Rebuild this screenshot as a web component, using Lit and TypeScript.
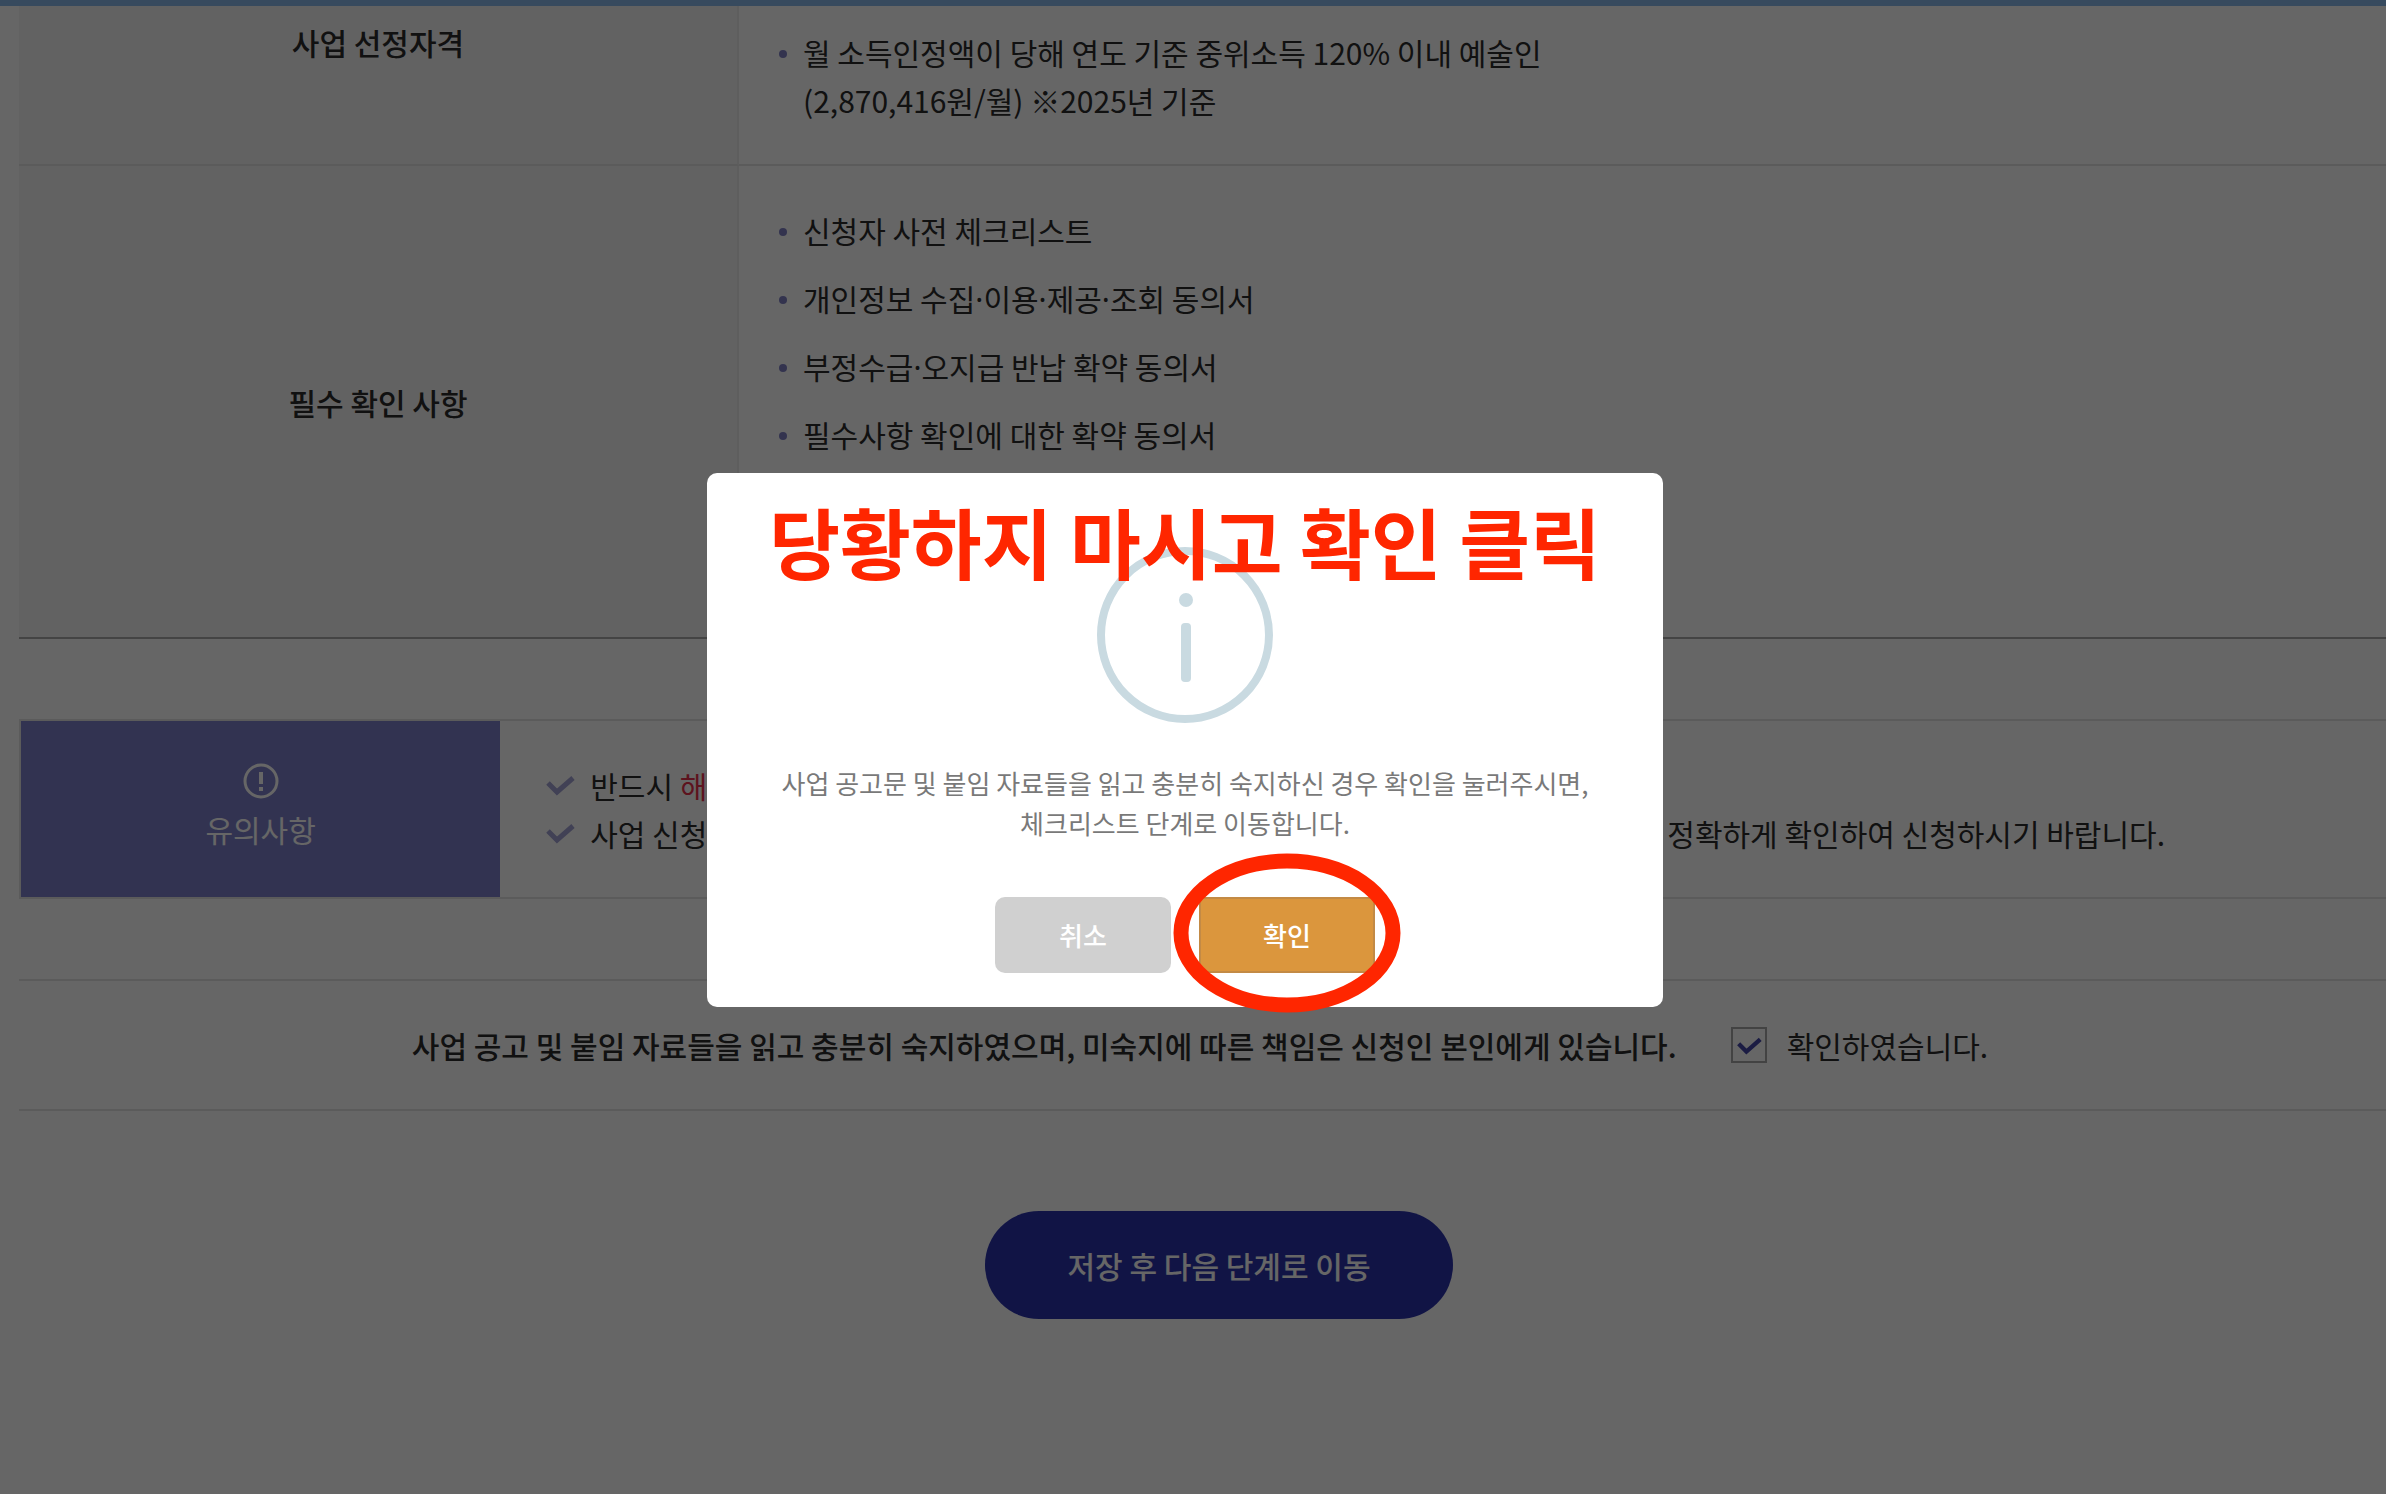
import { LitElement, html, css, svg } from "lit";
import { customElement, state } from "lit/decorators.js";

const REQUIRED_DOCS = [
  "신청자 사전 체크리스트",
  "개인정보 수집·이용·제공·조회 동의서",
  "부정수급·오지급 반납 확약 동의서",
  "필수사항 확인에 대한 확약 동의서",
];

const tick = svg`<path d="M3 9 L12 18 L28 4" fill="none" stroke="currentColor" stroke-width="5"></path>`;

// The CJK family has a full-width middle dot, so the dot is set in the Latin family.
const withNarrowDots = (text: string) =>
  text.split("·").map((part, i) => (i ? html`<span class="dot">·</span>${part}` : part));

@customElement("confirm-dialog")
class ConfirmDialog extends LitElement {
  static styles = css`
    :host {
      display: block;
      width: 956px;
      max-width: 100%;
    }
    .dialog {
      position: relative;
      box-sizing: border-box;
      display: flex;
      flex-direction: column;
      align-items: center;
      padding: 74px 20px 34px;
      border-radius: 10px;
      background: #fff;
    }
    .callout {
      position: absolute;
      top: 24px;
      left: 0;
      right: 0;
      margin: 0;
      text-align: center;
      white-space: nowrap;
      font-size: 77px;
      line-height: 88px;
      font-weight: 700;
      color: #ff2600;
    }
    .info {
      display: block;
      width: 176px;
      height: 176px;
    }
    .message {
      margin: 40px 0 54px;
      text-align: center;
      font-size: 26px;
      line-height: 40px;
      color: #797979;
    }
    .actions {
      display: flex;
      gap: 28px;
    }
    .button {
      width: 176px;
      height: 76px;
      padding: 0;
      border: 0;
      border-radius: 10px;
      font: inherit;
      font-size: 26px;
      font-weight: 500;
      color: #fff;
      background: #d0d0d0;
    }
    .confirm-wrap {
      position: relative;
      display: flex;
    }
    .confirm {
      background: #db963d;
      border: 2px solid #c38a45;
      border-radius: 4px;
    }
    .ring {
      position: absolute;
      left: -26px;
      top: -44px;
      width: 228px;
      height: 160px;
      pointer-events: none;
    }
  `;

  render() {
    return html`
      <section class="dialog" role="dialog" aria-modal="true" aria-labelledby="message">
        <svg class="info" viewBox="0 0 176 176" aria-hidden="true">
          <circle cx="88" cy="88" r="84" fill="none" stroke="#c9dae1" stroke-width="8"></circle>
          <circle cx="89" cy="53" r="7" fill="#c9dae1"></circle>
          <rect x="84" y="76" width="10" height="59" rx="4" fill="#c9dae1"></rect>
        </svg>
        <p class="message" id="message">
          사업 공고문 및 붙임 자료들을 읽고 충분히 숙지하신 경우 확인을 눌러주시면,<br />체크리스트 단계로 이동합니다.
        </p>
        <div class="actions">
          <button class="button" type="button">취소</button>
          <div class="confirm-wrap">
            <button class="button confirm" type="button">확인</button>
            <svg class="ring" viewBox="0 0 228 160" aria-hidden="true">
              <ellipse cx="114" cy="80" rx="106" ry="72" fill="none" stroke="#ff2600" stroke-width="15"></ellipse>
            </svg>
          </div>
        </div>
        <p class="callout">당황하지 마시고 확인 클릭</p>
      </section>
    `;
  }
}

@customElement("app-root")
class AppRoot extends LitElement {
  @state() private agreed = true;

  static styles = css`
    :host {
      display: block;
      font-family: "Noto Sans CJK KR", "Noto Sans", sans-serif;
      font-size: 30px;
      line-height: 48px;
      color: #2b2b2b;
    }
    .page {
      position: relative;
      min-height: 100vh;
      overflow: hidden;
      background: #fff;
    }
    .topbar {
      height: 6px;
      background: #8ab9ea;
    }
    .content {
      margin: 0 -33px 0 19px;
    }
    .table {
      width: 100%;
      border-collapse: separate;
      border-spacing: 0;
      table-layout: fixed;
      border-bottom: 2px solid #aaa;
    }
    .head {
      width: 30%;
      box-sizing: border-box;
      padding: 0;
      border-right: 2px solid #eaeaea;
      background: #f5f5f5;
      font-weight: 500;
      text-align: center;
    }
    .cell {
      padding: 40px;
      vertical-align: top;
    }
    .first .head {
      padding-top: 12px;
      vertical-align: top;
    }
    .first .cell {
      padding-top: 22px;
    }
    .first .head,
    .first .cell {
      border-bottom: 2px solid #e4e4e4;
    }
    .required {
      height: 471px;
    }
    .list {
      margin: 0;
      padding: 0;
      list-style: none;
      display: grid;
      gap: 20px;
    }
    .item {
      display: grid;
      grid-template-columns: 24px 1fr;
    }
    .item::before {
      content: "";
      width: 8px;
      height: 8px;
      margin-top: 22px;
      border-radius: 50%;
      background: #7f80c4;
    }
    .dot {
      font-family: "Noto Sans", sans-serif;
      line-height: 1;
    }
    .notice {
      display: grid;
      grid-template-columns: 20% 1fr;
      margin-top: 80px;
      border: 2px solid #e4e4e4;
    }
    .notice-title {
      display: flex;
      flex-direction: column;
      align-items: center;
      gap: 6px;
      padding: 42px 0 44px;
      background: #7e80cb;
      color: #fff;
    }
    .alert {
      width: 36px;
      height: 36px;
    }
    .notice-list {
      margin: 0;
      padding: 0 45px;
      list-style: none;
      align-self: center;
    }
    .notice-item {
      display: grid;
      grid-template-columns: 45px auto auto;
      justify-content: start;
      align-items: center;
    }
    .tick {
      width: 30px;
      height: 22px;
      color: #a3a3d4;
    }
    .tail {
      margin-left: 960px;
    }
    .red {
      color: #e8304c;
    }
    .agree {
      display: flex;
      justify-content: center;
      align-items: center;
      gap: 54px;
      margin-top: 80px;
      padding: 40px 38px 40px 0;
      border-top: 2px solid #e4e4e4;
      border-bottom: 2px solid #e4e4e4;
    }
    .statement {
      margin: 0;
      font-weight: 500;
    }
    .check {
      display: flex;
      align-items: center;
      gap: 20px;
    }
    .box-wrap {
      display: grid;
      place-items: center;
    }
    .box,
    .box-tick {
      grid-area: 1 / 1;
    }
    .box {
      appearance: none;
      box-sizing: border-box;
      width: 36px;
      height: 36px;
      margin: 0;
      border: 2px solid #a8a8a8;
      background: #fff;
    }
    .box-tick {
      width: 26px;
      height: 19px;
      color: #4547a8;
      pointer-events: none;
    }
    .submit {
      display: flex;
      justify-content: center;
      margin-top: 100px;
    }
    .save {
      width: 468px;
      height: 108px;
      padding: 0;
      border: 0;
      border-radius: 54px;
      background: #2c34ad;
      color: #fff;
      font: inherit;
      font-weight: 500;
    }
    .overlay {
      position: absolute;
      inset: 0;
      display: flex;
      justify-content: center;
      align-items: center;
      padding: 0 16px 14px 0;
      background: rgba(0, 0, 0, 0.6);
    }
  `;

  render() {
    return html`
      <main class="page">
        <div class="topbar"></div>
        <div class="content">
          <table class="table">
            <tbody>
              <tr class="first">
                <th class="head" scope="row">사업 선정자격</th>
                <td class="cell">
                  <ul class="list">
                    <li class="item">
                      <span>월 소득인정액이 당해 연도 기준 중위소득 120% 이내 예술인<br />(2,870,416원/월) ※2025년 기준</span>
                    </li>
                  </ul>
                </td>
              </tr>
              <tr class="required">
                <th class="head" scope="row">필수 확인 사항</th>
                <td class="cell">
                  <ul class="list">
                    ${REQUIRED_DOCS.map((doc) => html`<li class="item"><span>${withNarrowDots(doc)}</span></li>`)}
                  </ul>
                </td>
              </tr>
            </tbody>
          </table>

          <section class="notice">
            <div class="notice-title">
              <svg class="alert" viewBox="0 0 36 36" aria-hidden="true">
                <circle cx="18" cy="18" r="16" fill="none" stroke="#fff" stroke-width="3"></circle>
                <path d="M18 9 V21 M18 24 V28" stroke="#fff" stroke-width="4"></path>
              </svg>
              <span>유의사항</span>
            </div>
            <ul class="notice-list">
              <li class="notice-item">
                <svg class="tick" viewBox="0 0 30 22" aria-hidden="true">${tick}</svg>
                <span>반드시 <span class="red">해</span></span>
              </li>
              <li class="notice-item">
                <svg class="tick" viewBox="0 0 30 22" aria-hidden="true">${tick}</svg>
                <span>사업 신청</span>
                <span class="tail">정확하게 확인하여 신청하시기 바랍니다.</span>
              </li>
            </ul>
          </section>

          <section class="agree">
            <p class="statement">
              사업 공고 및 붙임 자료들을 읽고 충분히 숙지하였으며, 미숙지에 따른 책임은 신청인 본인에게 있습니다.
            </p>
            <label class="check">
              <span class="box-wrap">
                <input
                  class="box"
                  type="checkbox"
                  .checked=${this.agreed}
                  @change=${(e: Event) => (this.agreed = (e.target as HTMLInputElement).checked)}
                />
                ${this.agreed
                  ? html`<svg class="box-tick" viewBox="0 0 30 22" aria-hidden="true">${tick}</svg>`
                  : null}
              </span>
              <span>확인하였습니다.</span>
            </label>
          </section>

          <div class="submit">
            <button class="save" type="button">저장 후 다음 단계로 이동</button>
          </div>
        </div>
        <div class="overlay"><confirm-dialog></confirm-dialog></div>
      </main>
    `;
  }
}
